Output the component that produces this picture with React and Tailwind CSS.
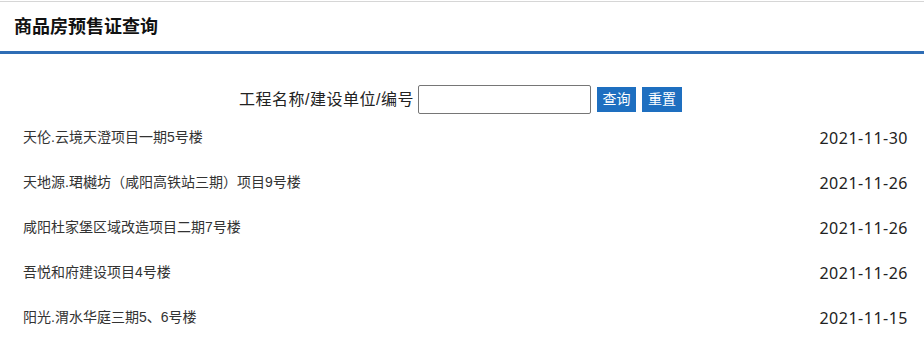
import React, { useState } from 'react';

const items = [
  { name: '天伦.云境天澄项目一期5号楼', date: '2021-11-30' },
  { name: '天地源.珺樾坊（咸阳高铁站三期）项目9号楼', date: '2021-11-26' },
  { name: '咸阳杜家堡区域改造项目二期7号楼', date: '2021-11-26' },
  { name: '吾悦和府建设项目4号楼', date: '2021-11-26' },
  { name: '阳光.渭水华庭三期5、6号楼', date: '2021-11-15' },
];

export default function App() {
  const [keyword, setKeyword] = useState('');

  return (
    <div
      className="w-[924px] h-[355px] bg-white pt-px overflow-hidden"
      style={{ fontFamily: '"Liberation Sans", "Noto Sans CJK SC", sans-serif' }}
    >
      <div className="border-t border-[#d6d6d6]">
        <div className="h-[52px] flex items-center pl-[14px] border-b-[3px] border-[#2e6db5]">
          <h2 className="text-[18px] font-bold text-[#111] pt-[2px]">商品房预售证查询</h2>
        </div>

        <div className="mt-[31px] flex items-center justify-center pr-[3px]">
          <span className="text-[16px] text-[#222] mr-[4px] tracking-[0.5px]">工程名称/建设单位/编号</span>
          <input
            className="w-[173px] h-[29px] border border-[#767676] rounded-[2px] px-1 text-sm outline-none"
            value={keyword}
            onChange={(e) => setKeyword(e.target.value)}
          />
          <button className="ml-[6px] w-[39px] h-[25px] bg-[#1e6fc0] text-white text-[14px]">查询</button>
          <button className="ml-[6px] w-[40px] h-[25px] bg-[#1e6fc0] text-white text-[14px]">重置</button>
        </div>

        <div className="mt-[1px] pl-[23px] pr-[16px]">
          {items.map((item, i) => (
            <div key={i} className="h-[45px] flex items-center justify-between">
              <span className="text-[14px] text-[#333]">{item.name}</span>
              <span
                className="text-[16px] text-[#222] tracking-[0.5px]"
                style={{ fontFamily: '"Noto Sans", "Open Sans", sans-serif' }}
              >
                {item.date}
              </span>
            </div>
          ))}
        </div>
      </div>
    </div>
  );
}
